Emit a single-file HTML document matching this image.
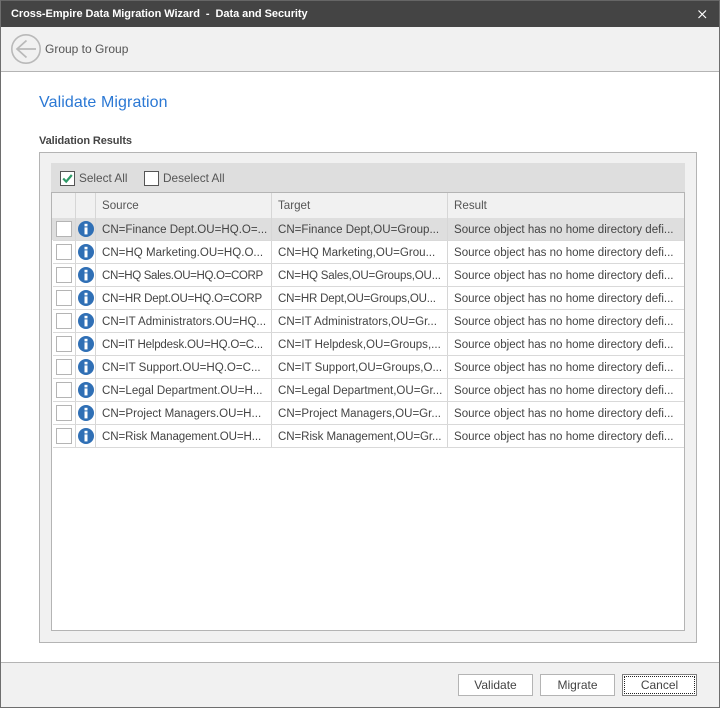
<!DOCTYPE html>
<html><head><meta charset="utf-8"><style>
html,body{margin:0;padding:0;background:#fff}
body{width:720px;height:708px;overflow:hidden;position:relative;font-family:"Liberation Sans",sans-serif;font-size:12px;color:#444}
div{position:absolute;box-sizing:border-box;white-space:nowrap}
.cell{height:22px;line-height:24px;overflow:hidden;font-size:11.55px}
.cb{width:16px;height:16px;border:1px solid #b4b4b4;background:#fff;left:56px}
.sep{width:1px;background:#d6d6d6}
.hl{left:53px;width:631px;height:1px;background:#d9d9d9}
.btn{height:22px;width:75px;top:674px;border:1px solid #b4b4b4;background:#fff;text-align:center;line-height:20px;color:#444}
</style></head><body>
<div style="left:0;top:0;width:720px;height:708px;border:1px solid #6e6e6e;border-top:0;z-index:9"></div>
<div style="left:0;top:0;width:720px;height:27px;background:#444;border-top:1px solid #666"></div>
<div style="left:11px;top:7px;color:#fff;font-weight:bold;font-size:11px;line-height:14px;letter-spacing:-.05px">Cross-Empire Data Migration Wizard&nbsp; -&nbsp; Data and Security</div>
<svg style="position:absolute;left:697px;top:9px" width="11" height="11" viewBox="0 0 11 11"><path d="M1.5 1.5L9 9M9 1.5L1.5 9" stroke="#fff" stroke-width="1.2" fill="none"/></svg>
<div style="left:0;top:27px;width:720px;height:45px;background:#f1f1f1;border-bottom:1px solid #b4b4b4"></div>
<svg style="position:absolute;left:10px;top:33px" width="32" height="32" viewBox="0 0 32 32"><circle cx="16" cy="16" r="14.2" fill="none" stroke="#b9b9b9" stroke-width="1.6"/><path d="M26 16H7M16.5 7.5L7 16L16.5 24.5" fill="none" stroke="#b9b9b9" stroke-width="1.7"/></svg>
<div style="left:45px;top:41px;line-height:16px;color:#555;font-size:12px">Group to Group</div>
<div style="left:39px;top:93px;font-size:16px;line-height:20px;color:#2b78d4;letter-spacing:.1px">Validate Migration</div>
<div style="left:39px;top:134px;font-weight:bold;font-size:11px;line-height:14px;color:#444;letter-spacing:-.1px">Validation Results</div>
<div style="left:39px;top:152px;width:658px;height:491px;background:#f1f1f1;border:1px solid #b4b4b4"></div>
<div style="left:51px;top:163px;width:634px;height:29px;background:#dedede"></div>
<div style="left:60px;top:171px;width:15px;height:15px;background:#fff;border:1px solid #555"></div>
<svg style="position:absolute;left:60px;top:171px" width="15" height="15" viewBox="0 0 15 15"><path d="M3.2 7.5L6.2 10.6L11.8 4" fill="none" stroke="#2f9a68" stroke-width="2.2"/></svg>
<div style="left:79px;top:170px;line-height:16px;color:#555;font-size:11.8px">Select All</div>
<div style="left:144px;top:171px;width:15px;height:15px;background:#fff;border:1px solid #555"></div>
<div style="left:163px;top:170px;line-height:16px;color:#555;font-size:11.8px">Deselect All</div>
<div style="left:51px;top:192px;width:634px;height:439px;background:#fff;border:1px solid #b4b4b4"></div>
<div style="left:52px;top:193px;width:632px;height:25px;background:#f1f1f1"></div>
<div style="left:102px;top:198px;line-height:16px;color:#555;font-size:11.6px">Source</div>
<div style="left:278px;top:198px;line-height:16px;color:#555;font-size:11.6px">Target</div>
<div style="left:454px;top:198px;line-height:16px;color:#555;font-size:11.6px">Result</div>
<div style="left:52px;top:218px;width:632px;height:22px;background:#dedede"></div>
<div class="sep" style="left:75px;top:193px;height:255px"></div>
<div class="sep" style="left:95px;top:193px;height:255px"></div>
<div class="sep" style="left:271px;top:193px;height:255px"></div>
<div class="sep" style="left:447px;top:193px;height:255px"></div>
<div class="hl" style="top:240px"></div><div class="hl" style="top:263px"></div><div class="hl" style="top:286px"></div><div class="hl" style="top:309px"></div><div class="hl" style="top:332px"></div><div class="hl" style="top:355px"></div><div class="hl" style="top:378px"></div><div class="hl" style="top:401px"></div><div class="hl" style="top:424px"></div><div class="hl" style="top:447px"></div>

<div class="cb" style="top:221px"></div><div class="cb" style="top:244px"></div><div class="cb" style="top:267px"></div><div class="cb" style="top:290px"></div><div class="cb" style="top:313px"></div><div class="cb" style="top:336px"></div><div class="cb" style="top:359px"></div><div class="cb" style="top:382px"></div><div class="cb" style="top:405px"></div><div class="cb" style="top:428px"></div>

<svg style="position:absolute;left:78px;top:221px" width="16" height="230" viewBox="0 0 16 230">
<defs><g id="i"><circle cx="8" cy="8" r="8" fill="#2f6fb5"/><rect x="6.5" y="2.8" width="3" height="2.6" fill="#fff"/><rect x="6.5" y="6.4" width="3" height="7" fill="#fff"/></g></defs>
<use href="#i"/><use href="#i" y="23"/><use href="#i" y="46"/><use href="#i" y="69"/><use href="#i" y="92"/><use href="#i" y="115"/><use href="#i" y="138"/><use href="#i" y="161"/><use href="#i" y="184"/><use href="#i" y="207"/>
</svg>

<div class="cell" style="left:102px;top:218px">CN=Finance Dept.OU=HQ.O=...</div><div class="cell" style="left:278px;top:218px">CN=Finance Dept,OU=Group...</div><div class="cell" style="left:454px;top:218px">Source object has no home directory defi...</div>
<div class="cell" style="left:102px;top:241px">CN=HQ Marketing.OU=HQ.O...</div><div class="cell" style="left:278px;top:241px">CN=HQ Marketing,OU=Grou...</div><div class="cell" style="left:454px;top:241px">Source object has no home directory defi...</div>
<div class="cell" style="left:102px;top:264px;letter-spacing:-.37px">CN=HQ Sales.OU=HQ.O=CORP</div><div class="cell" style="left:278px;top:264px;letter-spacing:-.2px">CN=HQ Sales,OU=Groups,OU...</div><div class="cell" style="left:454px;top:264px">Source object has no home directory defi...</div>
<div class="cell" style="left:102px;top:287px;letter-spacing:-.2px">CN=HR Dept.OU=HQ.O=CORP</div><div class="cell" style="left:278px;top:287px;letter-spacing:-.2px">CN=HR Dept,OU=Groups,OU...</div><div class="cell" style="left:454px;top:287px">Source object has no home directory defi...</div>
<div class="cell" style="left:102px;top:310px">CN=IT Administrators.OU=HQ...</div><div class="cell" style="left:278px;top:310px">CN=IT Administrators,OU=Gr...</div><div class="cell" style="left:454px;top:310px">Source object has no home directory defi...</div>
<div class="cell" style="left:102px;top:333px;letter-spacing:-.2px">CN=IT Helpdesk.OU=HQ.O=C...</div><div class="cell" style="left:278px;top:333px">CN=IT Helpdesk,OU=Groups,...</div><div class="cell" style="left:454px;top:333px">Source object has no home directory defi...</div>
<div class="cell" style="left:102px;top:356px">CN=IT Support.OU=HQ.O=C...</div><div class="cell" style="left:278px;top:356px">CN=IT Support,OU=Groups,O...</div><div class="cell" style="left:454px;top:356px">Source object has no home directory defi...</div>
<div class="cell" style="left:102px;top:379px">CN=Legal Department.OU=H...</div><div class="cell" style="left:278px;top:379px">CN=Legal Department,OU=Gr...</div><div class="cell" style="left:454px;top:379px">Source object has no home directory defi...</div>
<div class="cell" style="left:102px;top:402px">CN=Project Managers.OU=H...</div><div class="cell" style="left:278px;top:402px">CN=Project Managers,OU=Gr...</div><div class="cell" style="left:454px;top:402px">Source object has no home directory defi...</div>
<div class="cell" style="left:102px;top:425px;letter-spacing:-.1px">CN=Risk Management.OU=H...</div><div class="cell" style="left:278px;top:425px;letter-spacing:-.08px">CN=Risk Management,OU=Gr...</div><div class="cell" style="left:454px;top:425px">Source object has no home directory defi...</div>

<div style="left:0;top:662px;width:720px;height:46px;background:#f1f1f1;border-top:1px solid #b4b4b4"></div>
<div class="btn" style="left:458px">Validate</div>
<div class="btn" style="left:540px">Migrate</div>
<div class="btn" style="left:622px;border:1px solid #808080"><div style="left:1px;top:1px;width:71px;height:18px;border:1px dotted #222"></div>Cancel</div>
</body></html>
